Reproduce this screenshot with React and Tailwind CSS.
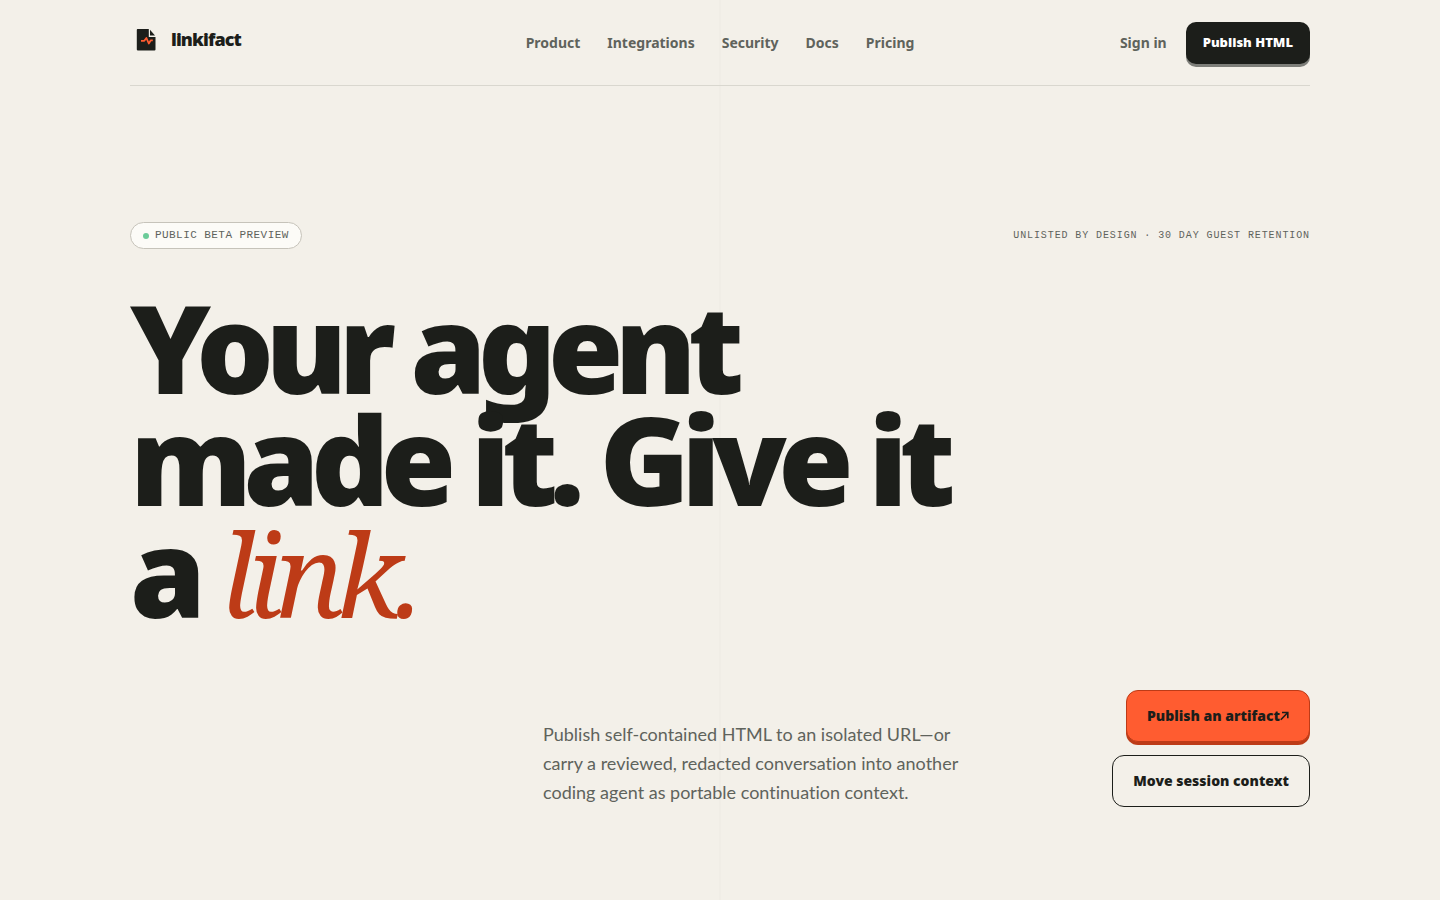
import React from 'react';

const navItems = ['Product', 'Integrations', 'Security', 'Docs', 'Pricing'];

const Logo = () => (
  <a href="#" className="flex items-center gap-[7px] justify-self-start pb-2 text-lg leading-[34px] font-black tracking-tighter">
    <svg width="34" height="34" viewBox="0 0 34 34" aria-hidden="true">
      <path d="M7.500 7H18.800V15H25.500V27.500Q25.500 28.500 24.500 28.500H8Q6.800 28.500 6.800 27.500V8Q6.800 7 7.500 7Z" fill="#1c1e1a" />
      <path d="M20 7.800L25 13.500H20Z" fill="#1c1e1a" />
      <path d="M11 18.800H14.300L16.400 16L18.800 21.500L20.800 18.300H22.800" fill="none" stroke="#ff5c30" strokeWidth="1.800" strokeLinejoin="round" />
    </svg>
    linkifact
  </a>
);

const Header = () => (
  <header className="grid grid-cols-[1fr_auto_1fr] items-center border-b border-[#d9d7cf] pt-[22px] pb-[21px]">
    <Logo />
    <nav className="flex gap-[27px] text-sm font-bold text-[#5f635c]">
      {navItems.map((item) => (
        <a key={item} href="#">{item}</a>
      ))}
    </nav>
    <div className="flex items-center gap-[19px] justify-self-end">
      <a href="#" className="text-sm font-bold text-[#5f635c]">Sign in</a>
      <button
        type="button"
        className="h-[42px] rounded-[10px] bg-[#1c1e1a] px-[17px] text-[13px] font-black text-white shadow-[0_3px_0_#7d7e79]"
      >
        Publish HTML
      </button>
    </div>
  </header>
);

const Hero = () => (
  <main className="pt-[136px] pb-[93px]">
    <div className="flex items-center justify-between font-['Liberation_Mono',monospace] text-[#5f635c]">
      <p className="flex h-[27px] items-center gap-[6px] rounded-full border border-[#c6c3ba] bg-[#fcfbf7] px-3 text-[11px] tracking-[0.04em]">
        <span className="size-[6px] rounded-full bg-[#6bcb98]" />
        PUBLIC BETA PREVIEW
      </p>
      <p className="text-[10px] tracking-[0.09em]">UNLISTED BY DESIGN · 30 DAY GUEST RETENTION</p>
    </div>

    <h1 className="mt-[42px] max-w-[900px] text-[122px] leading-[112px] font-black tracking-[-0.07em]">
      Your agent <br />
      made it. Give it <br />
      a{' '}
      <em className="font-['Noto_Serif',serif] text-[116px] font-normal tracking-[-0.07em] text-[#bd3b17]">link.</em>
    </h1>

    <div className="mt-[61px] grid grid-cols-[35%_1fr_auto] items-end">
      <p className="col-start-2 max-w-[440px] font-['Lato',sans-serif] text-lg leading-[29px] text-[#5f635c] [font-variant-ligatures:none]">
        Publish self-contained HTML to an isolated URL—or carry a reviewed, redacted conversation into another
        coding agent as portable continuation context.
      </p>
      <div className="flex flex-col items-end gap-[13px]">
        <button
          type="button"
          className="flex h-[52px] items-center rounded-xl border border-[#bd3b17] bg-[#ff5c30] px-5 text-sm font-black shadow-[0_3px_0_#bd3b17]"
        >
          Publish an artifact
          <svg width="9" height="10" viewBox="0 0 9 10" fill="none" stroke="currentColor" strokeWidth="1.600" aria-hidden="true">
            <path d="M0.800 8.800L7.800 1.500M2 1.500H7.800V7.200" />
          </svg>
        </button>
        <button
          type="button"
          className="h-[52px] rounded-xl border border-[#1c1e1a] px-5 text-sm font-black"
        >
          Move session context
        </button>
      </div>
    </div>
  </main>
);

const App = () => {
  return (
    <div className="min-h-screen bg-[#f3f0e9] bg-[linear-gradient(#f0ede6,#f0ede6)] bg-[length:2px_100%] bg-top bg-no-repeat px-6 font-['Noto_Sans',sans-serif] text-[#1c1e1a]">
      <div className="mx-auto max-w-[1180px]">
        <Header />
        <Hero />
      </div>
    </div>
  );
};

export default App;
